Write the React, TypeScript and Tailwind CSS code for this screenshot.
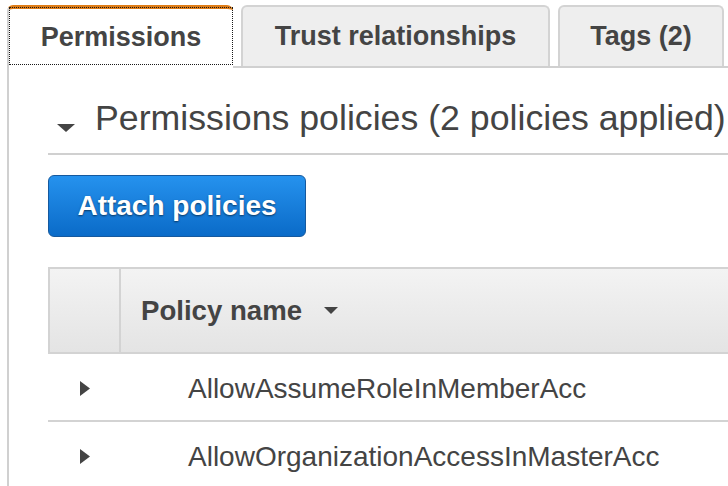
import React from "react"

const tabs = [
  { label: "Permissions", width: "w-[226px]", active: true },
  { label: "Trust relationships", width: "w-[309px]", active: false },
  { label: "Tags (2)", width: "w-[166px]", active: false },
]

const policies = ["AllowAssumeRoleInMemberAcc", "AllowOrganizationAccessInMasterAcc"]

const Tabs = () => {
  return (
    <div className="flex items-end gap-2 h-[61px]">
      {tabs.map((tab) =>
        tab.active ? (
          <div
            key={tab.label}
            className={`${tab.width} relative z-10 -mb-[2px] h-[63px] flex items-center justify-center rounded-t-[6px] border-t-[4px] border-l-2 border-t-[#dd7b16] border-l-[#cfcfcf] bg-white text-[27px] font-bold`}
          >
            <div className="absolute left-0 right-0 -top-[2px] bottom-[3px] border border-dotted border-[#1a1a1a]" />
            <span className="-mt-[2px]">{tab.label}</span>
          </div>
        ) : (
          <div
            key={tab.label}
            className={`${tab.width} h-[61px] flex items-center justify-center rounded-t-[6px] border-2 border-b-0 border-[#d3d3d3] bg-[#eeeeee] text-[27px] font-bold`}
          >
            {tab.label}
          </div>
        )
      )}
    </div>
  )
}

const App = () => {
  return (
    <div className="w-[728px] h-[486px] overflow-hidden bg-white text-[#444444] font-['Liberation_Sans',Arial,sans-serif]">
      <div className="w-[900px] pl-[7px] pt-[5px]">
        <Tabs />
        <div className="border-t-2 border-l-2 border-[#d0d0d0] pl-[39px] pb-10">
          {/* section heading */}
          <div className="mt-[29px] flex items-start gap-5 pl-[9px] pb-[14px] border-b-2 border-[#d0d0d0]">
            <svg width="18" height="8" viewBox="0 0 18 8" className="mt-[27px] shrink-0">
              <polygon points="0,0 18,0 9,8" fill="#444444" />
            </svg>
            <h2 className="text-[35.7px] leading-[42px] font-normal whitespace-nowrap">
              Permissions policies (2 policies applied)
            </h2>
          </div>

          <button className="mt-5 w-[258px] h-[62px] rounded-[6px] border border-[#15599e] bg-gradient-to-b from-[#2592ee] to-[#0a6bc8] text-white text-[28px] font-bold [text-shadow:0_1px_2px_rgba(0,0,0,0.55)]">
            Attach policies
          </button>

          {/* policy table */}
          <div className="mt-[30px]">
            <div className="flex h-[87px] border-t-2 border-l-2 border-b-2 border-[#d3d3d3] bg-gradient-to-b from-[#f3f3f3] to-[#e4e4e4]">
              <div className="w-[71px] shrink-0 border-r-2 border-[#d3d3d3]" />
              <div className="flex items-center gap-[22px] pl-5 text-[27.6px] font-bold">
                Policy name
                <svg width="14" height="7" viewBox="0 0 14 7" className="shrink-0">
                  <polygon points="0,0 14,0 7,7" fill="#444444" />
                </svg>
              </div>
            </div>
            {policies.map((name) => (
              <div key={name} className="flex items-center h-[68px] border-b-2 border-[#d3d3d3]">
                <div className="w-[140px] shrink-0 pl-[32px] pt-[3px]">
                  <svg width="10" height="15" viewBox="0 0 10 15" className="shrink-0">
                    <polygon points="0,0 10,7.5 0,15" fill="#444444" />
                  </svg>
                </div>
                <span className="text-[28px] whitespace-nowrap pt-[3px]">{name}</span>
              </div>
            ))}
          </div>
        </div>
      </div>
    </div>
  )
}

export default App
